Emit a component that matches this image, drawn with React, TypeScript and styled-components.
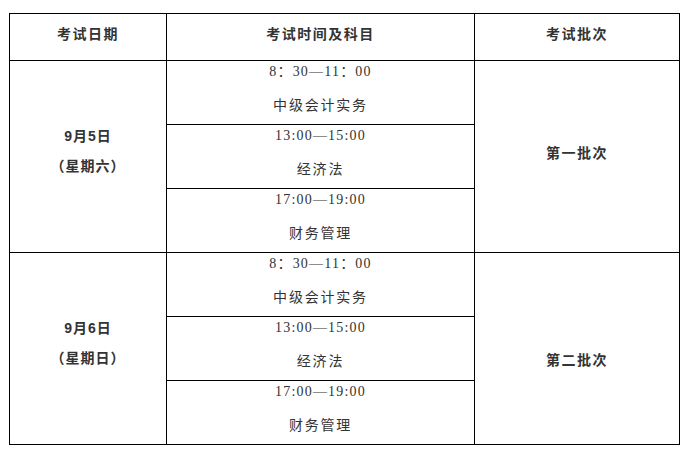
import React from "react";
import styled, { createGlobalStyle } from "styled-components";

const Global = createGlobalStyle`
  html, body { margin: 0; padding: 0; background: #fff; }
  body { font-family: "Liberation Serif", "Noto Sans CJK SC", serif; }
`;

const Page = styled.div`
  padding: 13px 0 0 9px;
`;

const Table = styled.table`
  border-collapse: collapse;
  table-layout: fixed;
  width: 670px;
  color: #333;
  font-size: 14px;
`;

const HeadCell = styled.th`
  border: 1px solid #000;
  height: 38px;
  padding: 8px 0 0;
  vertical-align: top;
  font-family: "Noto Sans CJK SC", sans-serif;
  font-weight: 700;
  font-size: 14px;
  line-height: 22px;
  letter-spacing: 1.5px;
  color: #333;
`;

const DateCell = styled.td`
  border: 1px solid #000;
  padding: 0 0 12px;
  text-align: center;
  vertical-align: middle;
  font-family: "Liberation Sans", "Noto Sans CJK SC", sans-serif;
  font-weight: 700;
  line-height: 30px;
  letter-spacing: 1px;
`;

const BatchCell = styled.td<{ $shift: number }>`
  border: 1px solid #000;
  padding: ${(p) => (p.$shift < 0 ? `0 0 ${-p.$shift * 2}px` : `${p.$shift * 2}px 0 0`)};
  text-align: center;
  vertical-align: middle;
  font-family: "Noto Sans CJK SC", sans-serif;
  font-weight: 700;
  line-height: 22px;
  letter-spacing: 1.5px;
`;

const SessionCell = styled.td`
  border: 1px solid #000;
  height: 63px;
  padding: 0;
  vertical-align: top;
  text-align: center;
`;

const Session = styled.div`
  display: grid;
  row-gap: 10px;
  line-height: 22px;
`;

const Time = styled.span`
  font-family: "Liberation Serif", "Noto Sans CJK SC", serif;
  letter-spacing: 1.2px;
`;

const Subject = styled.span`
  font-family: "Noto Sans CJK SC", sans-serif;
  letter-spacing: 1.8px;
  font-size: 14px;
`;

const sessions = [
  { time: "8：30—11：00", subject: "中级会计实务" },
  { time: "13:00—15:00", subject: "经济法" },
  { time: "17:00—19:00", subject: "财务管理" },
];

const days = [
  { date: "9月5日", week: "（星期六）", batch: "第一批次", shift: -4.5 },
  { date: "9月6日", week: "（星期日）", batch: "第二批次", shift: 10 },
];

export default function App() {
  return (
    <Page>
      <Global />
      <Table>
        <colgroup>
          <col style={{ width: 157 }} />
          <col style={{ width: 308 }} />
          <col style={{ width: 205 }} />
        </colgroup>
        <thead>
          <tr>
            <HeadCell>考试日期</HeadCell>
            <HeadCell>考试时间及科目</HeadCell>
            <HeadCell>考试批次</HeadCell>
          </tr>
        </thead>
        <tbody>
          {days.map((d) =>
            sessions.map((s, i) => (
              <tr key={d.date + i}>
                {i === 0 && (
                  <DateCell rowSpan={3}>
                    {d.date}
                    <br />
                    {d.week}
                  </DateCell>
                )}
                <SessionCell>
                  <Session>
                    <Time>{s.time}</Time>
                    <Subject>{s.subject}</Subject>
                  </Session>
                </SessionCell>
                {i === 0 && (
                  <BatchCell rowSpan={3} $shift={d.shift}>
                    {d.batch}
                  </BatchCell>
                )}
              </tr>
            ))
          )}
        </tbody>
      </Table>
    </Page>
  );
}
